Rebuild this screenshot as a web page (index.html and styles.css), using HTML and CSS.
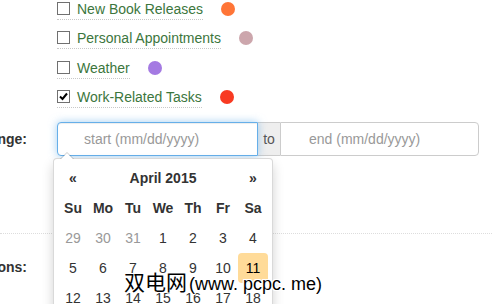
FILE: index.html
```html
<!DOCTYPE html>
<html lang="en">
<head>
    <meta charset="UTF-8">
    <title>Calendar Settings</title>
    <link rel="stylesheet" href="styles.css">
</head>
<body>
    <div class="group calendars-group">
        <div class="label"></div>
        <div class="calendars">
            <div class="cal">
                <label class="cal-name"><svg class="box" width="13" height="13" viewBox="0 0 13 13"><rect x="0.5" y="0.5" width="12" height="12" fill="#fff" stroke="#707070"/></svg>New Book Releases</label>
                <span class="dot orange"></span>
            </div>
            <div class="cal">
                <label class="cal-name"><svg class="box" width="13" height="13" viewBox="0 0 13 13"><rect x="0.5" y="0.5" width="12" height="12" fill="#fff" stroke="#707070"/></svg>Personal Appointments</label>
                <span class="dot mauve"></span>
            </div>
            <div class="cal">
                <label class="cal-name"><svg class="box" width="13" height="13" viewBox="0 0 13 13"><rect x="0.5" y="0.5" width="12" height="12" fill="#fff" stroke="#707070"/></svg>Weather</label>
                <span class="dot purple"></span>
            </div>
            <div class="cal">
                <label class="cal-name"><svg class="box" width="13" height="13" viewBox="0 0 13 13"><rect x="0.5" y="0.5" width="12" height="12" fill="#fff" stroke="#707070"/><path d="M3 6.5l2.5 2.5 4.5-5.5" fill="none" stroke="#000" stroke-width="2"/></svg>Work-Related Tasks</label>
                <span class="dot red"></span>
            </div>
        </div>
    </div>

    <div class="group range">
        <div class="label"><span>Date Range:</span></div>
        <div class="picker">
            <div class="daterange">
                <input class="date start" placeholder="start (mm/dd/yyyy)">
                <span class="addon">to</span>
                <input class="date end" placeholder="end (mm/dd/yyyy)">
            </div>
            <div class="dropdown">
                <table class="cal-table">
                    <tr class="head">
                        <th>&laquo;</th>
                        <th colspan="5">April 2015</th>
                        <th>&raquo;</th>
                    </tr>
                    <tr>
                        <th>Su</th><th>Mo</th><th>Tu</th><th>We</th><th>Th</th><th>Fr</th><th>Sa</th>
                    </tr>
                    <tr>
                        <td class="old">29</td><td class="old">30</td><td class="old">31</td><td>1</td><td>2</td><td>3</td><td>4</td>
                    </tr>
                    <tr>
                        <td>5</td><td>6</td><td>7</td><td>8</td><td>9</td><td>10</td><td class="today">11</td>
                    </tr>
                    <tr>
                        <td>12</td><td>13</td><td>14</td><td>15</td><td>16</td><td>17</td><td>18</td>
                    </tr>
                </table>
            </div>
        </div>
    </div>

    <div class="group notify">
        <div class="label"><span>Notifications:</span></div>
        <div></div>
    </div>

    <div class="watermark">双电网<span class="site">(www. pcpc. me)</span></div>
</body>
</html>
```

FILE: styles.css
```css
* { box-sizing: border-box; }
body { margin: 0; font-family: "Liberation Sans", Arial, sans-serif; font-size: 14px; color: #333; background: #fff; position: relative; height: 304px; overflow: hidden; }

.group { display: grid; grid-template-columns: 27px 1fr; column-gap: 30px; }
.label { display: flex; justify-content: flex-end; white-space: nowrap; font-weight: bold; padding-top: 7px; line-height: 20px; }

.calendars-group { margin-bottom: 14px; }
.calendars-group .label { padding-top: 0; }
.calendars { display: flex; flex-direction: column; align-items: flex-start; gap: 9.33px; }
.cal { display: flex; align-items: flex-start; }
.cal-name { display: flex; align-items: flex-start; line-height: 19px; border-bottom: 1px dotted #c8c8c8; color: #3c763d; }
.box { flex: none; margin: 2px 7px 0 0; }
.dot { width: 14px; height: 14px; border-radius: 50%; margin: 2px 0 0 18px; }
.orange { background: #ff7537; }
.mauve { background: #cca6ac; }
.purple { background: #a47ae2; }
.red { background: #f83a22; }

.range { margin-bottom: 77px; }
.picker { position: relative; }
.daterange { display: flex; width: 422px; height: 34px; }
.date { width: 201px; height: 34px; border: 1px solid #ccc; padding: 0 0 0 26px; font: inherit; color: #555; outline: none; background: #fff; }
.date::placeholder { color: #999; }
.start { border-color: #66afe9; border-radius: 4px 0 0 4px; box-shadow: inset 0 1px 1px rgba(0,0,0,.075), 0 0 8px rgba(102,175,233,.6); position: relative; z-index: 1; }
.addon { width: 22px; flex: none; background: #eee; border-top: 1px solid #ccc; border-bottom: 1px solid #ccc; color: #555; display: flex; align-items: center; justify-content: center; }
.end { width: 199px; padding-left: 28px; border-radius: 0 4px 4px 0; }

.dropdown { position: absolute; left: -4px; top: 36px; width: 220px; padding: 4px; background: #fff; border: 1px solid rgba(0,0,0,.15); border-radius: 4px; box-shadow: 0 6px 12px rgba(0,0,0,.175); z-index: 2; }
.dropdown::before { content: ""; position: absolute; top: -7px; left: 6px; border-left: 7px solid transparent; border-right: 7px solid transparent; border-bottom: 7px solid rgba(0,0,0,.2); }
.dropdown::after { content: ""; position: absolute; top: -6px; left: 7px; border-left: 6px solid transparent; border-right: 6px solid transparent; border-bottom: 6px solid #fff; }
.cal-table { border-collapse: collapse; border-spacing: 0; }
.cal-table th, .cal-table td { width: 30px; height: 30px; padding: 0; text-align: center; border-radius: 4px; }
.old { color: #999; }
.today { background: #ffdb99; color: #000; }

.notify { border-top: 1px dotted #ddd; padding-top: 16px; }

.watermark { position: absolute; left: 124px; top: 266px; font-family: "Noto Sans CJK SC", sans-serif; font-size: 21px; line-height: 30px; color: #000; z-index: 3; white-space: nowrap; text-shadow: 1px 0 #fff, -1px 0 #fff, 0 1px #fff, 0 -1px #fff, 1px 1px #fff, -1px -1px #fff, 1px -1px #fff, -1px 1px #fff; }
.site { font-family: "Liberation Sans", Arial, sans-serif; font-size: 18px; margin-left: 2px; }
```
